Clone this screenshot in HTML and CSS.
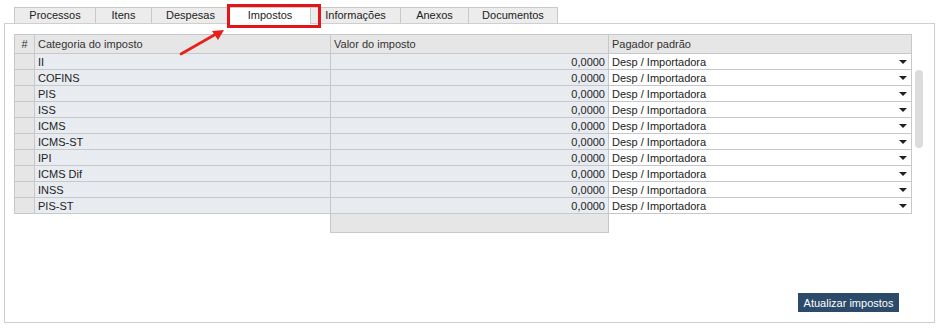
FILE: index.html
```html
<!DOCTYPE html>
<html lang="pt-BR">
<head>
  <meta charset="UTF-8" />
  <title>Impostos</title>
  <link rel="stylesheet" href="styles.css">
</head>
<body>
  <div class="page">
    <div class="tabs">
      <div class="tab w81">Processos</div>
      <div class="tab w56">Itens</div>
      <div class="tab w78">Despesas</div>
      <div class="tab w81 active">Impostos<span class="tab-edge"></span></div>
      <div class="tab w90">Informações</div>
      <div class="tab w68">Anexos</div>
      <div class="tab w90">Documentos</div>
    </div>

    <div class="highlight"></div>
    <svg class="arrow" width="50" height="30" viewBox="0 0 50 30">
      <line x1="3" y1="27" x2="38" y2="7" stroke="#e8201a" stroke-width="2.6" stroke-linecap="round" />
      <polygon points="46,3 34,4 40,13" fill="#e8201a" />
    </svg>

    <div class="panel">
      <table class="grid">
        <thead>
          <tr>
            <th class="c-num">#</th>
            <th class="c-cat">Categoria do imposto</th>
            <th class="c-val">Valor do imposto</th>
            <th class="c-pag">Pagador padrão</th>
          </tr>
        </thead>
        <tbody id="rows"></tbody>
        <tfoot>
          <tr>
            <td class="blank"></td>
            <td class="blank"></td>
            <td class="total"></td>
            <td class="blank"></td>
          </tr>
        </tfoot>
      </table>

      <div class="scroll-thumb"></div>

      <div class="actions">
        <button class="btn">Atualizar impostos</button>
      </div>
    </div>
  </div>

  <script>
    const impostos = ["II", "COFINS", "PIS", "ISS", "ICMS", "ICMS-ST", "IPI", "ICMS Dif", "INSS", "PIS-ST"];
    const tbody = document.getElementById("rows");

    impostos.forEach(nome => {
      const tr = document.createElement("tr");
      tr.innerHTML =
        '<td class="c-num"></td>' +
        '<td class="c-cat">' + nome + '</td>' +
        '<td class="c-val">0,0000</td>' +
        '<td class="c-pag"><span>Desp / Importadora</span><i class="caret"></i></td>';
      tbody.appendChild(tr);
    });
  </script>
</body>
</html>
```

FILE: styles.css
```css
body {
  margin: 0;
  background: #fff;
  font-family: Tahoma, "Liberation Sans", sans-serif;
  font-size: 11px;
  color: #222;
}

.page {
  position: relative;
  padding: 7px 8px 0 4px;
}

.tabs {
  display: flex;
  margin-left: 10px;
  height: 16px;
}

.tab {
  position: relative;
  box-sizing: border-box;
  height: 16px;
  background: #ececec;
  border: 1px solid #c9c9c9;
  border-right: none;
  border-bottom: none;
  text-align: center;
  line-height: 15px;
  color: #222;
}

.tab:last-child {
  border-right: 1px solid #c9c9c9;
}

.tab.active {
  background: #fff;
  height: 17px;
  z-index: 2;
}

.tab-edge {
  position: absolute;
  right: -9px;
  top: 0;
  width: 8px;
  height: 15px;
  background: #ececec;
  border-left: 1px solid #c9c9c9;
}

.w81 { width: 81px; }
.w56 { width: 56px; }
.w78 { width: 78px; }
.w90 { width: 90px; }
.w68 { width: 68px; }

.highlight {
  position: absolute;
  left: 227px;
  top: 4px;
  width: 88px;
  height: 18px;
  border: 3px solid #e3141a;
  z-index: 3;
}

.arrow {
  position: absolute;
  left: 178px;
  top: 27px;
  z-index: 3;
}

.panel {
  position: relative;
  box-sizing: border-box;
  height: 300px;
  border: 1px solid #cfcfcf;
  padding: 10px 0 0 9px;
}

.grid {
  border-collapse: collapse;
  table-layout: fixed;
}

.grid th,
.grid td {
  box-sizing: border-box;
  border: 1px solid #c6c9cc;
  padding: 0 3px;
  white-space: nowrap;
  overflow: hidden;
}

.grid th {
  height: 19px;
  background: #e6e6e6;
  font-weight: normal;
  text-align: left;
  color: #333;
}

.grid tbody td {
  height: 16px;
  line-height: 14px;
  background: #e8ecf0;
}

.grid th.c-num {
  text-align: center;
}

.c-num { width: 20px; }
.c-cat { width: 296px; }
.c-val { width: 278px; }
.c-pag { width: 303px; }

.grid tbody td.c-num {
  background: #e6e6e6;
}

.grid tbody td.c-val {
  text-align: right;
}

.grid tbody td.c-pag {
  background: #fff;
  position: relative;
}

.caret {
  position: absolute;
  right: 4px;
  top: 6px;
  border-left: 4px solid transparent;
  border-right: 4px solid transparent;
  border-top: 4px solid #222;
}

.grid tfoot td.blank {
  border: none;
  background: none;
}

.grid tfoot td.total {
  height: 19px;
  background: #e6e6e6;
}

.scroll-thumb {
  position: absolute;
  left: 910px;
  top: 46px;
  width: 8px;
  height: 78px;
  background: #dcdcdc;
  border-radius: 4px;
}

.actions {
  display: flex;
  justify-content: flex-end;
  padding: 60px 35px 0 0;
}

.btn {
  height: 19px;
  width: 101px;
  padding: 0;
  border: none;
  background: #2c4a6a;
  color: #fff;
  font-family: Tahoma, "Liberation Sans", sans-serif;
  font-size: 11px;
}
```
